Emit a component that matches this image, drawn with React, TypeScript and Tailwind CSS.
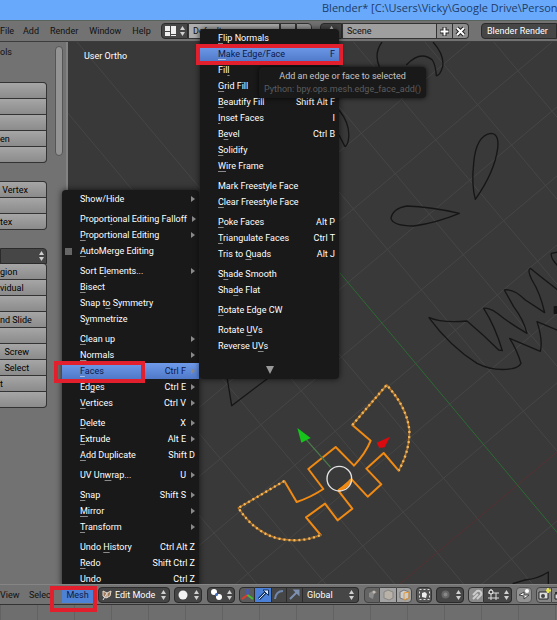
import type { ReactNode } from "react";

type Item = { label: string; keys?: string; sub?: boolean; active?: boolean; check?: boolean };

// "&" marks the access key of an entry
const meshMenu: Item[][] = [
  [{ label: "Show/Hide", sub: true }],
  [
    { label: "Proport&ional Editing Falloff", sub: true },
    { label: "&Proportional Editing", sub: true },
    { label: "&AutoMerge Editing", check: true },
  ],
  [
    { label: "Sort E&lements...", sub: true },
    { label: "&Bisect" },
    { label: "Snap t&o Symmetry" },
    { label: "S&ymmetrize" },
  ],
  [
    { label: "&Clean up", sub: true },
    { label: "&Normals", sub: true },
    { label: "&Faces", keys: "Ctrl F", sub: true, active: true },
    { label: "Ed&ges", keys: "Ctrl E", sub: true },
    { label: "&Vertices", keys: "Ctrl V", sub: true },
  ],
  [
    { label: "&Delete", keys: "X", sub: true },
    { label: "&Extrude", keys: "Alt E", sub: true },
    { label: "&Add Duplicate", keys: "Shift D" },
  ],
  [{ label: "UV Un&wrap...", keys: "U", sub: true }],
  [
    { label: "&Snap", keys: "Shift S", sub: true },
    { label: "&Mirror", sub: true },
    { label: "&Transform", sub: true },
  ],
  [
    { label: "Undo &History", keys: "Ctrl Alt Z" },
    { label: "&Redo", keys: "Shift Ctrl Z" },
    { label: "&Undo", keys: "Ctrl Z" },
  ],
];

const facesMenu: Item[][] = [
  [
    { label: "&Flip Normals" },
    { label: "&Make Edge/Face", keys: "F", active: true },
    { label: "Fil&l" },
    { label: "&Grid Fill" },
    { label: "&Beautify Fill", keys: "Shift Alt F" },
    { label: "&Inset Faces", keys: "I" },
    { label: "B&evel", keys: "Ctrl B" },
    { label: "&Solidify" },
    { label: "&Wire Frame" },
  ],
  [{ label: "Mark Freestyle Face" }, { label: "&Clear Freestyle Face" }],
  [
    { label: "&Poke Faces", keys: "Alt P" },
    { label: "&Triangulate Faces", keys: "Ctrl T" },
    { label: "Tris to &Quads", keys: "Alt J" },
  ],
  [{ label: "S&hade Smooth" }, { label: "Sha&de Flat" }],
  [{ label: "&Rotate Edge CW" }],
  [{ label: "Rotate &UVs" }, { label: "Reverse U&Vs" }],
];

function Label({ text }: { text: string }) {
  const i = text.indexOf("&");
  if (i < 0) return <span>{text}</span>;
  return (
    <span>
      {text.slice(0, i)}
      <u className="decoration-white/50 underline-offset-2">{text[i + 1]}</u>
      {text.slice(i + 2)}
    </span>
  );
}

function MenuRow({ item }: { item: Item }) {
  if (item.check) {
    return (
      <label className="flex h-4 items-center gap-2 pl-[3px]">
        <input type="checkbox" className="size-[7px] appearance-none bg-[#666]" />
        <Label text={item.label} />
      </label>
    );
  }
  return (
    <button
      className={
        item.active
          ? "flex h-4 w-full items-center bg-linear-to-b from-[#6f9bea] to-[#4f78c8] pr-1 pl-[18px] text-[#0b1a4a]"
          : "flex h-4 w-full items-center pr-1 pl-[18px]"
      }
    >
      <Label text={item.label} />
      <span className="ml-auto">{item.keys}</span>
      {item.sub && (
        <svg className="ml-[5px] shrink-0" width="4" height="6" viewBox="0 0 4 6">
          <path d="M0 0L4 3L0 6z" fill="#8a8a8a" />
        </svg>
      )}
    </button>
  );
}

function Menu({ groups }: { groups: Item[][] }) {
  return (
    <div className="flex flex-col gap-1">
      {groups.map((g, i) => (
        <div key={i}>
          {g.map((item) => (
            <MenuRow key={item.label} item={item} />
          ))}
        </div>
      ))}
    </div>
  );
}

function Spin() {
  return (
    <svg className="pointer-events-none shrink-0" width="5" height="10" viewBox="0 0 5 10">
      <path d="M0 4L2.5 0L5 4zM0 6L2.5 10L5 6z" fill="#d0d0d0" />
    </svg>
  );
}

function Icon({ children }: { children: ReactNode }) {
  return (
    <svg width="13" height="13" viewBox="0 0 13 13" fill="none" className="shrink-0">
      {children}
    </svg>
  );
}

function Tool({ name, className, children }: { name: string; className: string; children: ReactNode }) {
  return (
    <button aria-label={name} className={`flex h-4 shrink-0 items-center justify-center ${className}`}>
      {children}
    </button>
  );
}

function ToolGroup({ rows }: { rows: string[] }) {
  return (
    <div className="mr-2 flex flex-col gap-px overflow-hidden rounded-r border border-l-0 border-[#333] bg-[#333]">
      {rows.map((r, i) => (
        <button
          key={i}
          aria-label={r ? undefined : "Tool"}
          className="h-[15px] w-full overflow-hidden bg-linear-to-b from-[#a6a6a6] to-[#8b8b8b] text-left whitespace-pre text-black"
        >
          {r}
        </button>
      ))}
    </div>
  );
}

const steep = [-343, -261, -179, -97, -15, 70, 152, 237, 399, 481, 563, 645, 727];
const shallow = [84, 153, 222, 291, 360, 429, 498, 636, 705, 774];

// outline of the selected island, in thirds of a pixel
const island =
  "M500 45L397 165L452 212Q437 250 402 287L347 231L265 297L310 357Q272 382 230 396L193 333L55 414Q100 482 165 503Q235 522 302 495L258 442L315 401L353 451L397 416L355 362L395 328L443 380L484 343L439 296L491 249L536 302Q570 240 568 180Q560 110 500 45z";
const arcs = "M397 165L500 45Q560 110 568 180Q570 240 536 302M193 333L55 414Q100 482 165 503Q235 522 302 495";

function Viewport() {
  return (
    <svg className="absolute inset-0 h-full w-full" fill="none">
      <g transform="translate(-68 -42)">
        <g stroke="#464646">
          {steep.map((y) => (
            <line key={y} x1="-23" y1={y - 476} x2="1177" y2={y + 952} />
          ))}
          {shallow.map((y) => (
            <line key={y} x1="20" y1={y + 336} x2="1220" y2={y - 672} />
          ))}
        </g>
        <path d="M20 903L1220 -105" stroke="#563033" />
        <path d="M340 273L1140 1229" stroke="#2c6a34" />
        <g stroke="#161616" strokeWidth="4" strokeLinejoin="round">
          <g transform="translate(377 120) scale(.33333)">
            <path d="M295 238Q283 195 290 130Q297 45 343 40Q367 42 362 85Q353 155 295 238z" />
            <path d="M247 280Q160 260 90 258Q47 265 42 295Q47 317 110 318Q180 308 247 280z" />
            <path d="M155 592Q195 610 270 603Q320 645 365 690L376 692Q355 620 320 565Q340 560 380 595Q415 620 450 640Q440 600 410 560L382 510Q410 505 445 540L503 578Q490 520 465 480Q450 450 460 445Q490 470 545 512M155 592Q220 680 300 730Q350 755 405 746Q425 742 432 730Q420 690 398 655L490 694Q498 660 480 605L545 632M545 440Q520 415 523 400L545 396" />
            <path d="M532 560h14v20h-14z" fill="#161616" />
          </g>
          <g transform="translate(277 0)scale(.33333)">
            <path d="M315 126Q290 160 307 200M468 126Q503 165 497 200Q490 225 478 228M388 195Q430 150 466 180Q476 195 478 228M186 330Q222 375 214 420Q212 435 204 440L186 405" />
          </g>
          <path transform="translate(220 370) scale(.33333)" d="M20 15L35 107L150 20" />
          <path transform="translate(200 560) scale(.33333)" d="M938 71L975 60Q1015 56 1045 36V110" />
        </g>
        <g transform="translate(220 370) scale(.33333)">
          <path d={island} stroke="#f08a12" strokeWidth="6" strokeLinejoin="round" />
          <path d={arcs} stroke="#393939" strokeWidth="7" />
          <path d={arcs} stroke="#c47a20" strokeWidth="4" />
          <path d={arcs} stroke="#f0b860" strokeWidth="7" strokeDasharray="6 9" />
          <path d="M395 328Q382 350 355 362" stroke="#f08a12" strokeWidth="10" />
          <path d="M332 292L258 208" stroke="#4c7a4c" strokeWidth="4" />
          <path d="M232 174L272 204L244 218z" fill="#16c41c" />
          <path d="M510 200L470 218L478 234L494 232z" fill="#d90b10" />
          <circle cx="358" cy="326" r="37" stroke="#e4e4e4" strokeWidth="4" />
        </g>
      </g>
    </svg>
  );
}

const dark = "border border-[#2b2b2b] bg-[#464646] text-white";

export default function App() {
  return (
    <div className="relative flex min-h-screen w-full flex-col overflow-hidden bg-[#727272] font-[Roboto,'Noto_Sans',sans-serif] text-[9px] leading-3 whitespace-nowrap">
      <header className="flex h-5 items-start overflow-hidden bg-[#69a9fb] pl-[322px] font-['Open_Sans','Noto_Sans',sans-serif] text-[11px] leading-4 text-[#1d3c66]">
        Blender* [C:\Users\Vicky\Google Drive\Person
      </header>

      <nav className="flex h-[22px] items-center overflow-hidden border-y border-t-[#58635d] border-b-[#3c3c3c] bg-[#727272] text-[#111]">
        <div className="flex w-[161px] shrink-0 gap-[11px]">
          <button className="w-3 text-left">File</button>
          <button>Add</button>
          <button>Render</button>
          <button>Window</button>
          <button>Help</button>
        </div>
        <Tool name="Screen layout" className={`w-[27px] gap-1 rounded-l ${dark}`}>
          <svg width="11" height="10" viewBox="0 0 11 10" fill="#eee">
            <path d="M0 0h5v5H0zM6 0h5v8H6zM0 6h5v4H0zM6 9h5v1H6z" />
          </svg>
          <Spin />
        </Tool>
        <input aria-label="Screen" defaultValue="Default" className="h-4 w-[92px] border border-[#333] bg-[#adadad] px-1 text-[#111]" />
        <Tool name="Add screen" className="w-4 border border-[#333] bg-[#9a9a9a]">{null}</Tool>
        <Tool name="Delete screen" className="w-4 rounded-r border border-[#333] bg-[#9a9a9a]">{null}</Tool>
        <Tool name="Browse scene" className={`ml-2 w-[22px] rounded-l ${dark}`}><Spin /></Tool>
        <input aria-label="Scene" defaultValue="Scene" className="h-4 w-[95px] border border-[#333] bg-[#9f9f9f] px-1 text-[#111]" />
        <Tool name="Add scene" className="w-4 border border-l-0 border-[#333] bg-[#8e8e8e]">
          <Icon><path d="M6.5 2v9M2 6.5h9" stroke="#222" strokeWidth="4" /><path d="M6.5 2.500v8M2.500 6.500h8" stroke="#fff" strokeWidth="2" /></Icon>
        </Tool>
        <Tool name="Delete scene" className="w-4 rounded-r border border-l-0 border-[#333] bg-[#8e8e8e]">
          <Icon><path d="M3 3l7 7M10 3l-7 7" stroke="#222" strokeWidth="4" /><path d="M3 3l7 7M10 3l-7 7" stroke="#fff" strokeWidth="2" /></Icon>
        </Tool>
        <select aria-label="Render engine" className={`ml-3 h-4 min-w-[76px] flex-1 appearance-none rounded-l px-[5px] ${dark}`}>
          <option>Blender Render</option>
        </select>
      </nav>

      <div className="flex flex-1">
        <aside className="flex w-[68px] shrink-0 border-r-2 border-[#838383] bg-[#727272]">
          <div className="w-[55px] overflow-hidden pt-1">
            <h2 className="mb-6 text-[#111]">ols</h2>
            <ToolGroup rows={["", "", "", "en", ""]} />
            <div className="h-[18px]" />
            <ToolGroup rows={[" Vertex", "", "tex"]} />
            <div className="relative mt-[18px] mr-2">
              <select aria-label="Option" className={`block h-4 w-full appearance-none rounded-tr ${dark}`}>
                <option></option>
              </select>
              <div className="absolute top-[3px] right-[3px]"><Spin /></div>
            </div>
            <div className="-mt-px">
              <ToolGroup rows={["gion", "vidual", "", "nd Slide", "", "  Screw", "  Select", "t", ""]} />
            </div>
          </div>
          <div className="mt-1 h-[110px] w-2 rounded-full border border-[#555] bg-[#949494]" />
        </aside>
        <main className="relative flex-1 overflow-hidden bg-[#393939]">
          <Viewport />
          <p className="relative pt-2 pl-4 text-white">User Ortho</p>
        </main>
      </div>

      <footer className="relative z-10">
        <div className="flex h-[21px] items-center overflow-hidden border-y border-t-[#858585] border-b-[#333] bg-[#727272]">
          <button className="w-[22px] shrink-0 text-left text-[#111]">View</button>
          <button className="ml-[7px] w-[33px] shrink-0 text-left text-[#111]">Select</button>
          <button className="h-4 w-[31px] shrink-0 bg-[#4e82d6] text-[#0b1a4a]">Mesh</button>
          <div className={`ml-[5px] flex h-4 w-[72px] shrink-0 items-center gap-[3px] rounded px-[3px] ${dark}`}>
            <svg width="10" height="12" viewBox="0 0 10 12" fill="none">
              <path d="M1 2l4 2 4-2-1 5-4 2-3-2z" fill="#a07858" stroke="#e6d8c8" />
              <path d="M5 4L1 11M5 4v5" stroke="#ddd" />
            </svg>
            <select aria-label="Mode" className="h-3 min-w-0 flex-1 appearance-none">
              <option>Edit Mode</option>
            </select>
            <Spin />
          </div>
          <Tool name="Shading" className={`ml-1 w-7 gap-[6px] rounded ${dark}`}>
            <svg width="10" height="10"><circle cx="5" cy="5" r="4.500" fill="#f2f2f2" /></svg>
            <Spin />
          </Tool>
          <Tool name="Pivot" className={`ml-[5px] w-7 gap-1 rounded ${dark}`}>
            <Icon><circle cx="4" cy="4" r="3" fill="#fff" /><circle cx="9" cy="9" r="3" fill="#fff" /><circle cx="6.500" cy="6.500" r="1.500" fill="#3d6ec2" /></Icon>
            <Spin />
          </Tool>
          <Tool name="Manipulator" className="ml-1 w-4 rounded-l border border-[#2b2b2b] bg-[#5b5b5b]">
            <Icon><path d="M6.500 7V1" stroke="#3557e8" strokeWidth="2" /><path d="M6.500 7L1 11" stroke="#e03a2a" strokeWidth="2" /><path d="M6.500 7L12 11" stroke="#48bd38" strokeWidth="2" /></Icon>
          </Tool>
          <Tool name="Translate" className="w-4 border-y border-[#2b2b2b] bg-[#4b80d8]">
            <Icon><path d="M2 11L9 4" stroke="#14305e" strokeWidth="3" /><path d="M2 11L9 4" stroke="#d5e5ff" /><path d="M6 2h5.500v5.500z" fill="#d5e5ff" stroke="#14305e" /></Icon>
          </Tool>
          <Tool name="Rotate" className={`w-4 ${dark}`}>
            <Icon><path d="M2 11Q3 3 10 3" stroke="#6f87ad" strokeWidth="2" /></Icon>
          </Tool>
          <Tool name="Scale" className={`w-4 border-l-0 ${dark}`}>
            <Icon><path d="M2 11L9 4M7 2.500h3.500v3.500z" stroke="#7c90b2" strokeWidth="2" /></Icon>
          </Tool>
          <div className={`flex h-4 w-14 shrink-0 items-center rounded-r border-l-0 px-1 ${dark}`}>
            <select aria-label="Orientation" className="h-3 min-w-0 flex-1 appearance-none">
              <option>Global</option>
            </select>
            <Spin />
          </div>
          <Tool name="Vertex select" className="ml-[5px] w-4 rounded-l border border-[#444] bg-[#646464]">
            <Icon><path d="M3 5l4-2 4 1-3 2-1 5-4-2z" fill="#8b8b8b" /><circle cx="8" cy="4" r="1.500" fill="#c5b9ab" /></Icon>
          </Tool>
          <Tool name="Edge select" className="w-4 border-y border-[#444] bg-[#a3a3a3]">
            <Icon><path d="M2 4l4-2 5 2v6l-4 2-5-2z" fill="#b8b2a9" stroke="#898582" /></Icon>
          </Tool>
          <Tool name="Face select" className="w-4 rounded-r border border-[#444] bg-[#a3a3a3]">
            <Icon><path d="M2 4l4-2 5 2v6l-4 2-5-2z" fill="#ccc" stroke="#777" /><path d="M6 5l5-1v6l-5 2z" stroke="#e39a3c" /></Icon>
          </Tool>
          <Tool name="Limit selection" className="ml-1 w-4 rounded border border-[#333] bg-[#555]">
            <Icon><rect x="1.500" y="1.500" width="10" height="10" stroke="#ddd" strokeDasharray="2 2" /><path d="M4 5l3-1 2 2-1 4-4-1z" fill="#eee" /></Icon>
          </Tool>
          <Tool name="Proportional editing" className={`ml-1 w-7 gap-1 rounded ${dark}`}>
            <Icon><circle cx="6.500" cy="6.500" r="3" fill="#888" stroke="#666" strokeWidth="2" /></Icon>
            <Spin />
          </Tool>
          <Tool name="Snap" className="ml-1 w-4 rounded-l border border-[#333] bg-[#8a8a8a]">
            <Icon><path d="M3 7l4-4a3 3 0 0 1 4 4l-4 4M3 11l5-5" stroke="#ccc" strokeWidth="2" /></Icon>
          </Tool>
          <Tool name="Snap element" className={`w-7 gap-1 rounded-r border-l-0 ${dark}`}>
            <Icon><path d="M4 1v11M9 5v7M1 5h11M1 10h11" stroke="#ddd" /><circle cx="4" cy="4" r="2" fill="#444" stroke="#fff" /></Icon>
            <Spin />
          </Tool>
          <Tool name="Snap peel" className="ml-1 w-4 rounded border border-[#555] bg-[#929292]">
            <Icon><path d="M1 7l5-3v3h5l-5 4v-3z" fill="#fff" stroke="#444" /><circle cx="9" cy="3" r="2" fill="#fff" /></Icon>
          </Tool>
          <Tool name="Render image" className="ml-1 w-4 rounded-l border border-[#444] bg-[#858585]">
            <Icon><path d="M1 4h9v7H1z" fill="#ddd" stroke="#222" /><circle cx="5" cy="8" r="2" fill="#444" /><path d="M10 0v5M8 2.500h5" stroke="#e5e34f" strokeWidth="2" /></Icon>
          </Tool>
          <Tool name="Render animation" className="w-4 border-y border-[#444] bg-[#858585]">
            <Icon><path d="M1 5l10-3v3H1zM1 6h11v5H1z" fill="#ddd" stroke="#222" /></Icon>
          </Tool>
        </div>
        <div className="h-[15px] bg-[repeating-linear-gradient(90deg,#626262_0_1px,#6e6e6e_1px_37px)]" />
      </footer>

      <div className="absolute top-[190px] left-[62px] w-[137px] rounded-t bg-[#191919] pt-px text-white shadow-[0_0_6px_rgba(0,0,0,0.7)]">
        <Menu groups={meshMenu} />
      </div>

      <div className="absolute top-[29px] left-[200px] w-[139px] rounded bg-[#191919] pt-px text-white shadow-[0_0_6px_rgba(0,0,0,0.7)]">
        <Menu groups={facesMenu} />
        <svg className="mx-auto mt-3 mb-[5px]" width="8" height="8" viewBox="0 0 8 8">
          <path d="M0 0h8L4 8z" fill="#999" />
        </svg>
      </div>

      <div role="tooltip" className="absolute top-[67px] left-[259px] rounded bg-[#191919] px-[5px] py-[3px] shadow-[0_0_5px_rgba(0,0,0,0.8)]">
        <p className="text-center leading-[13px] text-[#c4c4c4]">Add an edge or face to selected</p>
        <p className="text-[#5c5c5c]">Python: bpy.ops.mesh.edge_face_add()</p>
      </div>

      {/* tutorial highlights */}
      <div className="pointer-events-none absolute top-[44px] left-[196px] h-[21px] w-[147px] border-4 border-[#e21f2d]" />
      <div className="pointer-events-none absolute top-[361px] left-[54px] h-[22px] w-[91px] border-4 border-[#e21f2d]" />
      <div className="pointer-events-none absolute top-[586px] left-[50px] z-20 h-[26px] w-[47px] border-4 border-[#e21f2d]" />
    </div>
  );
}
